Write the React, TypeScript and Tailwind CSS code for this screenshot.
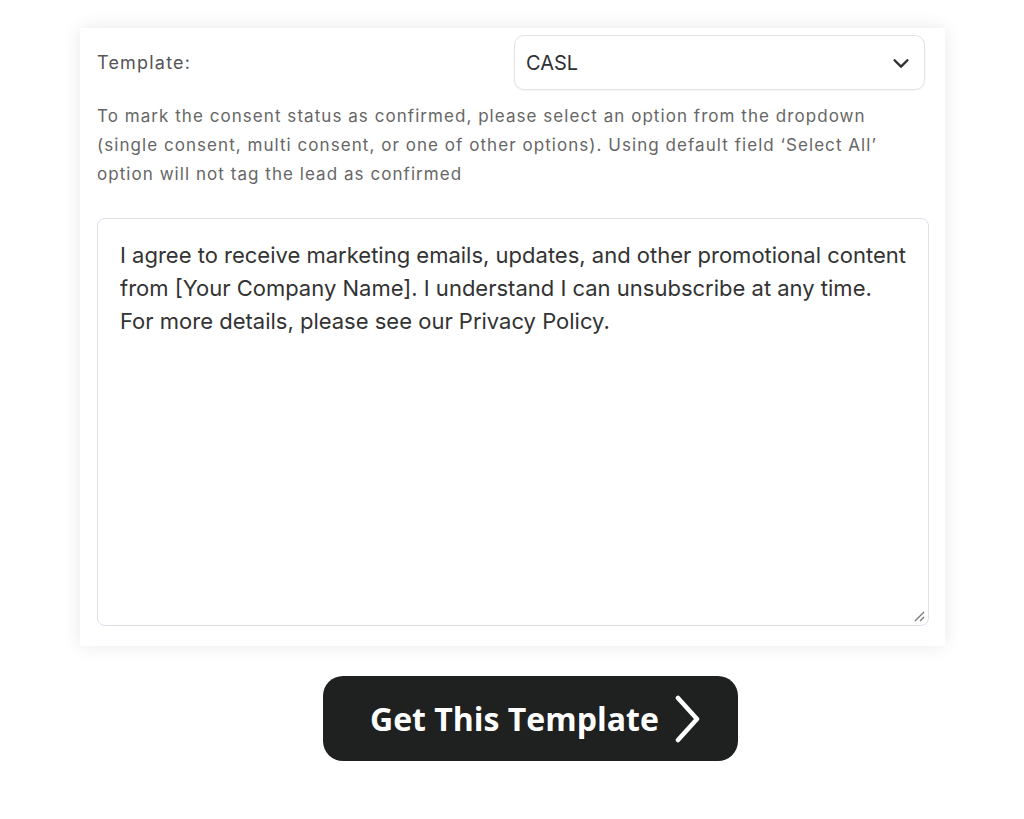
export default function App() {
  return (
    <div className="min-h-[819px] w-[1024px] bg-white pt-[28px] font-['Inter',sans-serif]">
      <div className="ml-[80px] w-[865px]">
        <div className="bg-white pl-[17px] pr-[16px] pt-[7px] pb-[20px] shadow-[0_0_18px_rgba(0,0,0,0.09)]">
          <div className="flex items-center justify-between pr-[4px]">
            <span className="text-[18px] tracking-[1.2px] text-[#555]">Template:</span>
            <div className="flex h-[55px] w-[411px] items-center justify-between rounded-[10px] border border-[#e3e3e3] pl-[11px] pr-[12px] shadow-[0_1px_2px_rgba(0,0,0,0.05)]">
              <span className="text-[20px] text-[#2f3033]">CASL</span>
              <svg width="22" height="22" viewBox="0 0 24 24" fill="none" stroke="#2f3033" strokeWidth="2.6" strokeLinecap="round" strokeLinejoin="round">
                <path d="M5 9l7 7 7-7" />
              </svg>
            </div>
          </div>
          <p className="mt-[12px] whitespace-nowrap text-[17px] leading-[29px] tracking-[1.05px] text-[#666]">
            To mark the consent status as confirmed, please select an option from the dropdown
            <br />
            (single consent, multi consent, or one of other options). Using default field ‘Select All’
            <br />
            option will not tag the lead as confirmed
          </p>
          <div className="relative mt-[29px] h-[408px] rounded-[8px] border border-[#dde1ea] px-[22px] pt-[20px]">
            <p className="whitespace-nowrap text-[22px] leading-[33px] text-[#333]">
              I agree to receive marketing emails, updates, and other promotional content
              <br />
              from [Your Company Name]. I understand I can unsubscribe at any time.
              <br />
              For more details, please see our Privacy Policy.
            </p>
            <svg className="absolute bottom-[2px] right-[2px]" width="14" height="14" viewBox="0 0 14 14" stroke="#777" strokeWidth="1.3">
              <path d="M3 12L12 3M8 12L12 8" />
            </svg>
          </div>
        </div>
        <button className="ml-[243px] mt-[30px] flex h-[85px] w-[415px] items-center rounded-[20px] bg-[#1f2120] pl-[47px] font-['Open_Sans',sans-serif] text-[32px] font-bold text-white">
          <span>Get This Template</span>
          <svg className="ml-[14px]" width="30" height="48" viewBox="0 0 30 48" fill="none" stroke="white" strokeWidth="4.5" strokeLinecap="round" strokeLinejoin="round">
            <path d="M5 3l19 21L5 45" />
          </svg>
        </button>
      </div>
    </div>
  );
}
